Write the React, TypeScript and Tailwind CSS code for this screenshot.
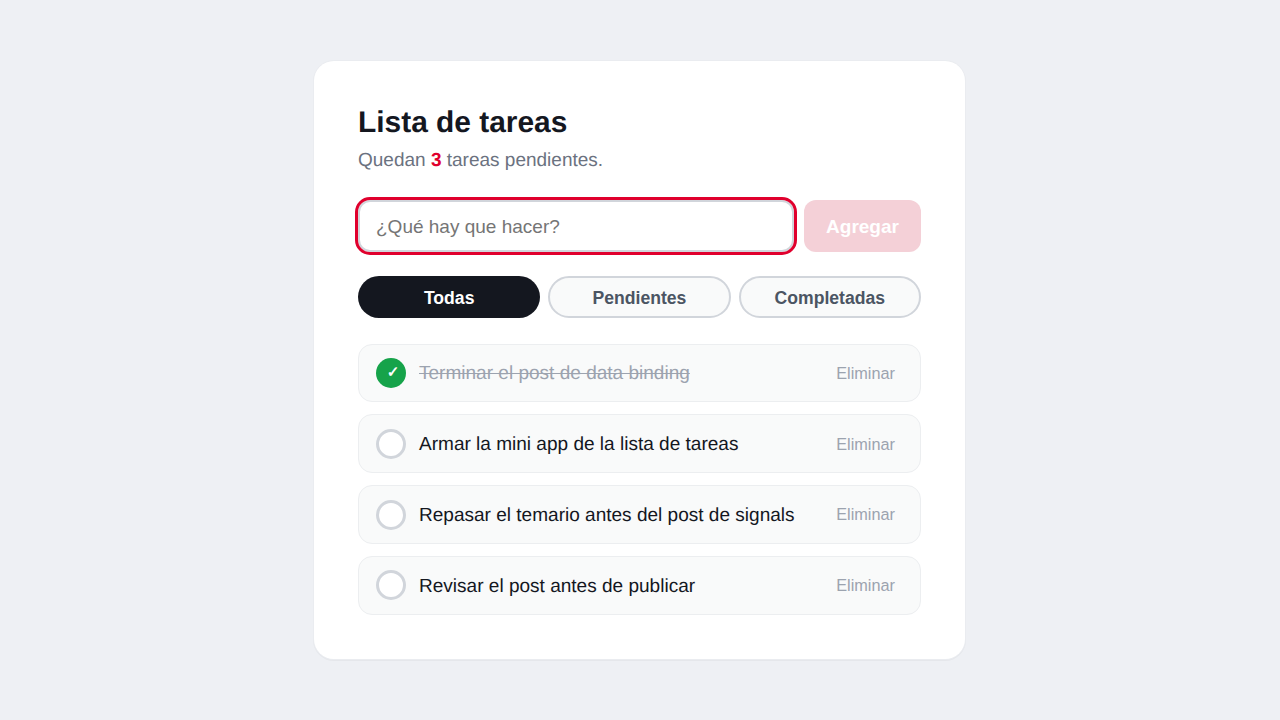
import { useState } from "react";

const TASKS = [
  { id: 1, text: "Terminar el post de data binding", done: true },
  { id: 2, text: "Armar la mini app de la lista de tareas", done: false },
  { id: 3, text: "Repasar el temario antes del post de signals", done: false },
  { id: 4, text: "Revisar el post antes de publicar", done: false },
];

const FILTERS = ["Todas", "Pendientes", "Completadas"];

export default function App() {
  const [filter] = useState("Todas");
  return (
    <div className="min-h-screen flex items-center justify-center bg-[#eef0f4] font-['Liberation_Sans',Arial,sans-serif] [text-rendering:geometricPrecision]">
      <div className="w-[651px] h-[598px] mr-px bg-white rounded-[20px] pt-[44px] px-[44px] shadow-[0_0_0_1px_#eaecf0,0_1px_0_1px_#e5e7eb]">
        <h1 className="text-[29.9px] leading-[36px] font-bold text-[#14171f]">Lista de tareas</h1>
        <p className="mt-2 text-[19px] leading-[24px] text-[#6b7280]">
          Quedan <strong className="text-[#e0002d]">3</strong> tareas pendientes.
        </p>
        <div className="mt-[27px] flex gap-[10px]">
          <input
            placeholder="¿Qué hay que hacer?"
            className="flex-1 min-w-0 h-[52px] px-4 pt-px text-[19px] text-[#14171f] bg-white border-2 border-[#d1d5db] rounded-[12px] outline-[3px] outline-[#e0002d] outline-offset-0 placeholder:text-[#757575]"
          />
          <button className="w-[117px] h-[52px] pt-[2px] rounded-[12px] bg-[#f4d0d7] text-white text-[19px] font-bold">
            Agregar
          </button>
        </div>
        <div className="mt-6 grid grid-cols-3 gap-2">
          {FILTERS.map((f) => (
            <button
              key={f}
              className={
                f === filter
                  ? "h-[42px] pt-[2px] rounded-full bg-[#14171f] text-white text-[17.6px] font-bold"
                  : "h-[42px] pt-[2px] rounded-full bg-[#f9fafa] border-2 border-[#d1d5db] text-[#4b5563] text-[17.6px] font-bold"
              }
            >
              {f}
            </button>
          ))}
        </div>
        <ul className="mt-[25.6px] flex flex-col gap-3">
          {TASKS.map((t) => (
            <li
              key={t.id}
              className="h-[58.8px] flex items-center pl-[17px] pr-[25px] bg-[#f9fafa] border border-[#eceef0] rounded-[14px]"
            >
              {t.done ? (
                <span className="w-[30px] h-[30px] pl-1 pt-px rounded-full bg-[#16a34a] flex items-center justify-center text-white text-[15px] font-bold">
                  ✓
                </span>
              ) : (
                <span className="w-[30px] h-[30px] rounded-full bg-white border-[3px] border-[#d1d5db]" />
              )}
              <span
                className={
                  t.done
                    ? "ml-[13px] flex-1 pt-[3px] text-[19.05px] text-[#9ca3af] line-through"
                    : "ml-[13px] flex-1 pt-[3px] text-[19.05px] text-[#14171f]"
                }
              >
                {t.text}
              </span>
              <button className="text-[16.3px] text-[#9ca3af]">Eliminar</button>
            </li>
          ))}
        </ul>
      </div>
    </div>
  );
}
